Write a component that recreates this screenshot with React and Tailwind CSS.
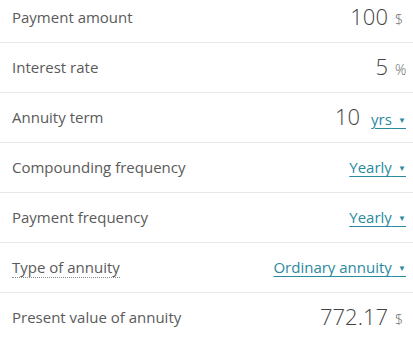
import React from "react";

function Row({ label, dotted, children }) {
  return (
    <div className="flex h-[50px] items-center justify-between border-b border-[#e8e8e8] pl-3 pr-[7px]">
      <span
        className={
          "text-[15px] text-[#5a5a5a] " +
          (dotted ? "border-b border-dotted border-[#888888] leading-[20px]" : "")
        }
      >
        {label}
      </span>
      <div className="flex items-baseline">{children}</div>
    </div>
  );
}

const Num = ({ children }) => (
  <span className="text-[22px] font-[350] text-[#444444] leading-none">{children}</span>
);
const Unit = ({ children }) => (
  <span className="ml-[7px] w-[11px] text-[14px] font-light text-[#666666]">{children}</span>
);
const Link = ({ children, ml }) => (
  <span
    className={
      "text-[15px] text-[#2a8a9e] underline underline-offset-[3px] decoration-[1px] " +
      (ml ? "ml-[11px]" : "")
    }
  >
    {children}
    <span className="text-[8px] align-[2px]">{"\u00a0\u00a0\u00a0▼"}</span>
  </span>
);

export default function App() {
  return (
    <div
      className="w-[413px] h-[337px] overflow-hidden bg-white"
      style={{ fontFamily: '"Open Sans", "Noto Sans", sans-serif' }}
    >
      <div className="-mt-[7px]">
        <Row label="Payment amount">
          <Num>100</Num>
          <Unit>$</Unit>
        </Row>
        <Row label="Interest rate">
          <Num>5</Num>
          <Unit>%</Unit>
        </Row>
        <Row label="Annuity term">
          <Num>10</Num>
          <Link ml>yrs</Link>
        </Row>
        <Row label="Compounding frequency">
          <Link>Yearly</Link>
        </Row>
        <Row label="Payment frequency">
          <Link>Yearly</Link>
        </Row>
        <Row label="Type of annuity" dotted>
          <Link>Ordinary annuity</Link>
        </Row>
        <Row label="Present value of annuity">
          <Num>772.17</Num>
          <Unit>$</Unit>
        </Row>
      </div>
    </div>
  );
}
